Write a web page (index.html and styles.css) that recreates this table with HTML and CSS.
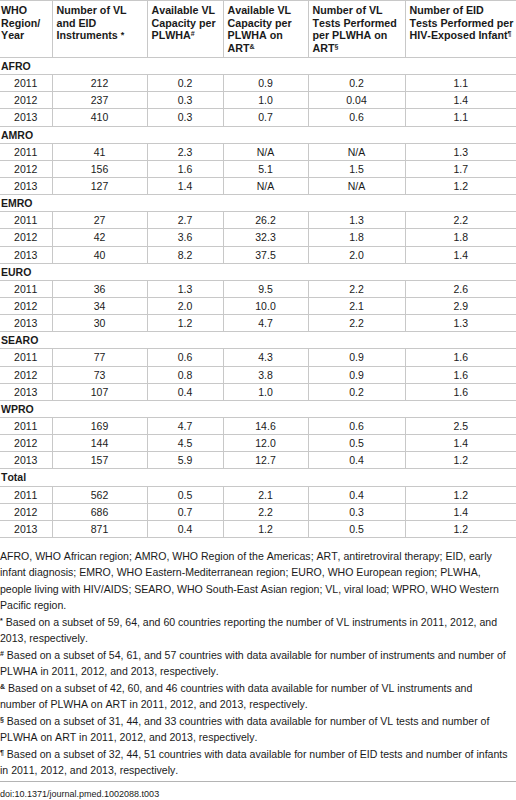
FILE: index.html
```html
<!DOCTYPE html>
<html lang="en">
<head>
    <meta charset="UTF-8">
    <title>Table 3</title>
    <link rel="stylesheet" href="styles.css">
</head>
<body>
    <table class="data">
        <colgroup>
            <col class="c-year">
            <col class="c-inst">
            <col class="c-cap">
            <col class="c-art">
            <col class="c-tests">
            <col class="c-eid">
        </colgroup>
        <thead>
            <tr>
                <th class="first">WHO Region/ Year</th>
                <th>Number of VL and EID Instruments<sup class="star">*</sup></th>
                <th>Available VL Capacity per PLWHA<sup>#</sup></th>
                <th>Available VL Capacity per PLWHA on ART<sup>&amp;</sup></th>
                <th>Number of VL Tests Performed per PLWHA on ART<sup>§</sup></th>
                <th class="last">Number of EID Tests Performed per HIV-Exposed Infant<sup>¶</sup></th>
            </tr>
        </thead>
        <tbody>
            <tr class="group"><td colspan="6">AFRO</td></tr>
            <tr><td>2011</td><td>212</td><td>0.2</td><td>0.9</td><td>0.2</td><td>1.1</td></tr>
            <tr><td>2012</td><td>237</td><td>0.3</td><td>1.0</td><td>0.04</td><td>1.4</td></tr>
            <tr><td>2013</td><td>410</td><td>0.3</td><td>0.7</td><td>0.6</td><td>1.1</td></tr>

            <tr class="group"><td colspan="6">AMRO</td></tr>
            <tr><td>2011</td><td>41</td><td>2.3</td><td>N/A</td><td>N/A</td><td>1.3</td></tr>
            <tr><td>2012</td><td>156</td><td>1.6</td><td>5.1</td><td>1.5</td><td>1.7</td></tr>
            <tr><td>2013</td><td>127</td><td>1.4</td><td>N/A</td><td>N/A</td><td>1.2</td></tr>

            <tr class="group"><td colspan="6">EMRO</td></tr>
            <tr><td>2011</td><td>27</td><td>2.7</td><td>26.2</td><td>1.3</td><td>2.2</td></tr>
            <tr><td>2012</td><td>42</td><td>3.6</td><td>32.3</td><td>1.8</td><td>1.8</td></tr>
            <tr><td>2013</td><td>40</td><td>8.2</td><td>37.5</td><td>2.0</td><td>1.4</td></tr>

            <tr class="group"><td colspan="6">EURO</td></tr>
            <tr><td>2011</td><td>36</td><td>1.3</td><td>9.5</td><td>2.2</td><td>2.6</td></tr>
            <tr><td>2012</td><td>34</td><td>2.0</td><td>10.0</td><td>2.1</td><td>2.9</td></tr>
            <tr><td>2013</td><td>30</td><td>1.2</td><td>4.7</td><td>2.2</td><td>1.3</td></tr>

            <tr class="group"><td colspan="6">SEARO</td></tr>
            <tr><td>2011</td><td>77</td><td>0.6</td><td>4.3</td><td>0.9</td><td>1.6</td></tr>
            <tr><td>2012</td><td>73</td><td>0.8</td><td>3.8</td><td>0.9</td><td>1.6</td></tr>
            <tr><td>2013</td><td>107</td><td>0.4</td><td>1.0</td><td>0.2</td><td>1.6</td></tr>

            <tr class="group"><td colspan="6">WPRO</td></tr>
            <tr><td>2011</td><td>169</td><td>4.7</td><td>14.6</td><td>0.6</td><td>2.5</td></tr>
            <tr><td>2012</td><td>144</td><td>4.5</td><td>12.0</td><td>0.5</td><td>1.4</td></tr>
            <tr><td>2013</td><td>157</td><td>5.9</td><td>12.7</td><td>0.4</td><td>1.2</td></tr>

            <tr class="group"><td colspan="6">Total</td></tr>
            <tr><td>2011</td><td>562</td><td>0.5</td><td>2.1</td><td>0.4</td><td>1.2</td></tr>
            <tr><td>2012</td><td>686</td><td>0.7</td><td>2.2</td><td>0.3</td><td>1.4</td></tr>
            <tr><td>2013</td><td>871</td><td>0.4</td><td>1.2</td><td>0.5</td><td>1.2</td></tr>
        </tbody>
    </table>

    <div class="notes">
        <p>AFRO, WHO African region; AMRO, WHO Region of the Americas; ART, antiretroviral therapy; EID, early infant diagnosis; EMRO, WHO Eastern-Mediterranean region; EURO, WHO European region; PLWHA, people living with HIV/AIDS; SEARO, WHO South-East Asian region; VL, viral load; WPRO, WHO Western Pacific region.</p>
        <p><sup>*</sup> Based on a subset of 59, 64, and 60 countries reporting the number of VL instruments in 2011, 2012, and 2013, respectively.</p>
        <p><sup>#</sup> Based on a subset of 54, 61, and 57 countries with data available for number of instruments and number of PLWHA in 2011, 2012, and 2013, respectively.</p>
        <p><sup>&amp;</sup> Based on a subset of 42, 60, and 46 countries with data available for number of VL instruments and number of PLWHA on ART in 2011, 2012, and 2013, respectively.</p>
        <p><sup>§</sup> Based on a subset of 31, 44, and 33 countries with data available for number of VL tests and number of PLWHA on ART in 2011, 2012, and 2013, respectively.</p>
        <p><sup>¶</sup> Based on a subset of 32, 44, 51 countries with data available for number of EID tests and number of infants in 2011, 2012, and 2013, respectively.</p>
    </div>

    <div class="doi">doi:10.1371/journal.pmed.1002088.t003</div>
</body>
</html>
```

FILE: styles.css
```css
body {
    margin: 0;
    font-family: "Liberation Sans", Arial, Helvetica, sans-serif;
    font-kerning: none;
    color: #1a1a1a;
    background-color: #ffffff;
}
.data {
    width: 516px;
    border-collapse: collapse;
    table-layout: fixed;
}
.c-year { width: 52px; }
.c-inst { width: 95px; }
.c-cap { width: 76px; }
.c-art { width: 85px; }
.c-tests { width: 97px; }
.c-eid { width: 111px; }
.data th {
    font-size: 10.7px;
    font-weight: bold;
    line-height: 12.5px;
    text-align: left;
    vertical-align: top;
    padding: 3px 3px 3px 4px;
    height: 50px;
    border-top: 1px solid #c8c8c8;
    border-bottom: 1px solid #c8c8c8;
    border-left: 1px solid #c8c8c8;
}
.data th.first {
    border-left: none;
    padding-left: 1px;
}
.data th.last {
    padding-right: 2px;
}
.data th sup {
    font-size: 7px;
    line-height: 0;
    vertical-align: 3px;
}
.data th sup.star {
    margin-left: 3px;
    font-size: 9px;
    vertical-align: 1px;
}
.data td {
    font-size: 10.5px;
    line-height: 16.14px;
    padding: 0;
    text-align: center;
    border-bottom: 1px solid #c8c8c8;
    border-left: 1px solid #c8c8c8;
}
.data td:first-child {
    border-left: none;
}
.data .group td {
    font-weight: bold;
    text-align: left;
    padding-left: 1px;
}
.notes {
    width: 509px;
    margin-top: 10px;
    font-size: 10.55px;
    line-height: 16.5px;
}
.notes p {
    margin: 0;
}
.notes sup {
    font-size: 7px;
    font-weight: bold;
    line-height: 0;
    vertical-align: 3px;
}
.doi {
    margin-top: 2px;
    padding-top: 6px;
    border-top: 1px solid #b4b4b4;
    font-size: 9px;
    line-height: 12px;
}
```
